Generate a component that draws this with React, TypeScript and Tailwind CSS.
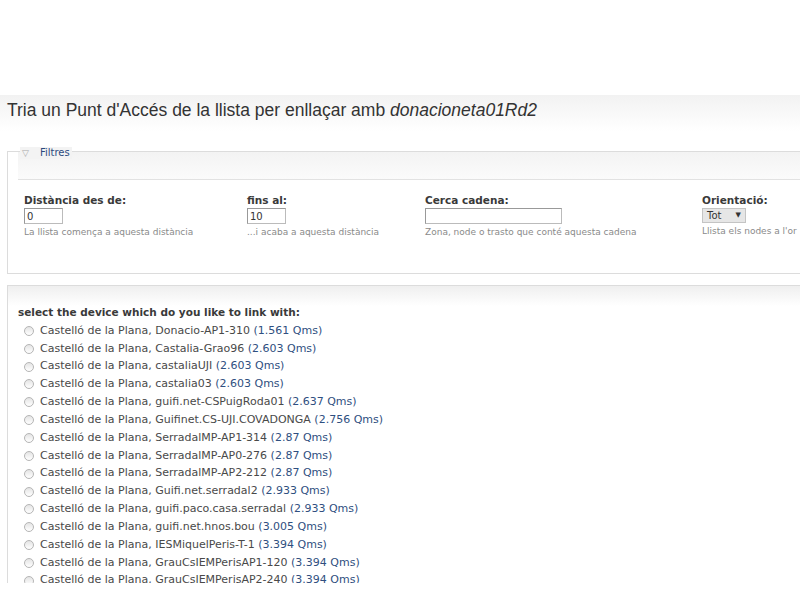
const devices = [
  ["Donacio-AP1-310", "1.561"],
  ["Castalia-Grao96", "2.603"],
  ["castaliaUJI", "2.603"],
  ["castalia03", "2.603"],
  ["guifi.net-CSPuigRoda01", "2.637"],
  ["Guifinet.CS-UJI.COVADONGA", "2.756"],
  ["SerradalMP-AP1-314", "2.87"],
  ["SerradalMP-AP0-276", "2.87"],
  ["SerradalMP-AP2-212", "2.87"],
  ["Guifi.net.serradal2", "2.933"],
  ["guifi.paco.casa.serradal", "2.933"],
  ["guifi.net.hnos.bou", "3.005"],
  ["IESMiquelPeris-T-1", "3.394"],
  ["GrauCsIEMPerisAP1-120", "3.394"],
  ["GrauCsIEMPerisAP2-240", "3.394"],
];

const filters = [
  { label: "Distància des de:", value: "0", w: "w-[39px]", desc: "La llista comença a aquesta distància", x: "w-[223px]" },
  { label: "fins al:", value: "10", w: "w-[39px]", desc: "...i acaba a aquesta distància", x: "w-[178px]" },
  { label: "Cerca cadena:", value: "", w: "w-[137px]", desc: "Zona, node o trasto que conté aquesta cadena", x: "w-[277px]" },
];

const App = () => {
  return (
    <div className="h-[600px] w-[800px] overflow-hidden bg-white font-['DejaVu_Sans',sans-serif] text-[#494949]">
      <div className="h-[95px]" />

      {/* Títol */}
      <div className="h-[36px] bg-gradient-to-b from-[#f2f2f2] to-white pl-[7px] pt-[3px]">
        <h1 className="font-['Liberation_Sans',Arial,sans-serif] text-[17.5px] leading-[24px] text-[#333]">
          Tria un Punt d'Accés de la llista per enllaçar amb <em>donacioneta01Rd2</em>
        </h1>
      </div>

      <div className="h-[20px]" />

      {/* Filtres */}
      <div className="relative ml-[7px] h-[123px] border-y border-l border-[#dcdcdc]">
        <div className="absolute -top-[5px] left-[12px] flex items-center gap-[11px] bg-[#f3f3f3] px-[2px] text-[10px] leading-[12px]">
          <span className="text-[9px] text-[#aaa]">▽</span>
          <span className="text-[#2c4a7e]">Filtres</span>
        </div>
        <div className="ml-[10px] h-[28px] border-b border-[#e2e2e2] bg-gradient-to-b from-[#f3f3f3] to-[#fbfbfb]" />
        <div className="flex pl-[16px] pt-[14px]">
          {filters.map((f) => (
            <div key={f.label} className={`${f.x} shrink-0`}>
              <div className="text-[10.5px] font-bold leading-[13px] text-[#3a3a3a]">{f.label}</div>
              <input
                readOnly
                value={f.value}
                className={`${f.w} mt-[1px] block h-[16px] border border-[#bbb] border-t-[#999] border-l-[#999] bg-white px-[2px] text-[10px] text-[#333] outline-none`}
              />
              <div className="mt-[2px] text-[9px] leading-[13px] text-[#8a8a8a]">{f.desc}</div>
            </div>
          ))}
          <div className="shrink-0">
            <div className="text-[10.5px] font-bold leading-[13px] text-[#3a3a3a]">Orientació:</div>
            <div className="mt-[1px] flex h-[15px] w-[44px] items-center justify-between border border-[#c4c4c4] bg-[#e6e6e6] px-[4px] text-[10px] text-[#333]">
              <span>Tot</span>
              <span className="text-[7px]">▼</span>
            </div>
            <div className="mt-[2px] whitespace-nowrap text-[9px] leading-[13px] text-[#8a8a8a]">
              Llista els nodes a l'or
            </div>
          </div>
        </div>
      </div>

      <div className="h-[11px]" />

      {/* Llista de dispositius */}
      <div className="ml-[7px] h-[298px] overflow-hidden border-l border-t border-[#dcdcdc]">
        <div className="h-[20px] bg-gradient-to-b from-[#efefef] to-white" />
        <div className="pl-[10px] text-[10.5px] font-bold leading-[13px] text-[#3a3a3a]">
          select the device which do you like to link with:
        </div>
        <div className="mt-[3px] pl-[16px]">
          {devices.map(([name, dist]) => (
            <label key={name} className="flex h-[17.85px] items-center gap-[6px] text-[11px]">
              <span className="h-[10px] w-[10px] shrink-0 rounded-full border border-[#b5b5b5] bg-gradient-to-b from-[#e4e4e4] to-white" />
              <span className="whitespace-nowrap">
                Castelló de la Plana, {name} <span className="text-[#2f4f80]">({dist} Qms)</span>
              </span>
            </label>
          ))}
        </div>
      </div>
    </div>
  );
};

export default App;
